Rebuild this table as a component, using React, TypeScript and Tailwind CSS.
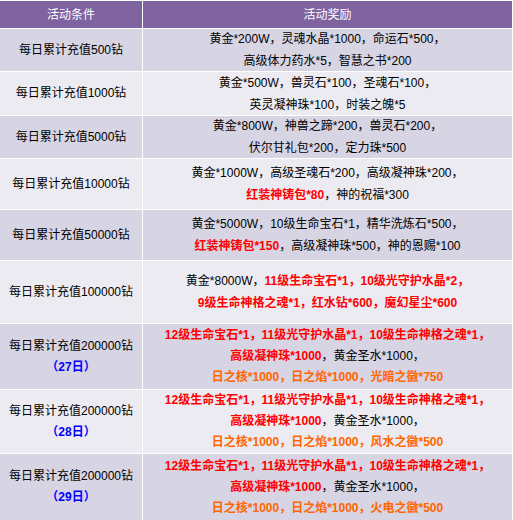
import type { ReactNode } from 'react';

type Row = {
  cond: string;
  day?: string;
  lines: ReactNode[];
  h: string;
  dark: boolean;
};

const R = ({ children }: { children: ReactNode }) => (
  <span className="font-bold text-[#ff0000]">{children}</span>
);
const O = ({ children }: { children: ReactNode }) => (
  <span className="font-bold text-[#ff6600]">{children}</span>
);

const topLines = [
  <R key="a">12级生命宝石*1，11级光守护水晶*1，10级生命神格之魂*1，</R>,
  <span key="b">
    <R>高级凝神珠*1000</R>，黄金圣水*1000，
  </span>,
];

const rows: Row[] = [
  {
    cond: '每日累计充值500钻',
    h: 'h-[42px]',
    dark: true,
    lines: ['黄金*200W，灵魂水晶*1000，命运石*500，', '高级体力药水*5，智慧之书*200'],
  },
  {
    cond: '每日累计充值1000钻',
    h: 'h-[43px]',
    dark: false,
    lines: ['黄金*500W，兽灵石*100，圣魂石*100，', '英灵凝神珠*100，时装之魄*5'],
  },
  {
    cond: '每日累计充值5000钻',
    h: 'h-[42px]',
    dark: true,
    lines: ['黄金*800W，神兽之蹄*200，兽灵石*200，', '伏尔甘礼包*200，定力珠*500'],
  },
  {
    cond: '每日累计充值10000钻',
    h: 'h-[50px]',
    dark: false,
    lines: [
      '黄金*1000W，高级圣魂石*200，高级凝神珠*200，',
      <span key="b">
        <R>红装神铸包*80</R>，神的祝福*300
      </span>,
    ],
  },
  {
    cond: '每日累计充值50000钻',
    h: 'h-[50px]',
    dark: true,
    lines: [
      '黄金*5000W，10级生命宝石*1，精华洗炼石*500，',
      <span key="b">
        <R>红装神铸包*150</R>，高级凝神珠*500，神的恩赐*100
      </span>,
    ],
  },
  {
    cond: '每日累计充值100000钻',
    h: 'h-[62px]',
    dark: false,
    lines: [
      <span key="a">
        黄金*8000W，<R>11级生命宝石*1，10级光守护水晶*2，</R>
      </span>,
      <R key="b">9级生命神格之魂*1，红水钻*600，魔幻星尘*600</R>,
    ],
  },
  {
    cond: '每日累计充值200000钻',
    day: '（27日）',
    h: 'h-[65px]',
    dark: true,
    lines: [...topLines, <O key="c">日之核*1000，日之焰*1000，光暗之徽*750</O>],
  },
  {
    cond: '每日累计充值200000钻',
    day: '（28日）',
    h: 'h-[63px]',
    dark: false,
    lines: [...topLines, <O key="c">日之核*1000，日之焰*1000，风水之徽*500</O>],
  },
  {
    cond: '每日累计充值200000钻',
    day: '（29日）',
    h: 'h-[66px]',
    dark: true,
    lines: [...topLines, <O key="c">日之核*1000，日之焰*1000，火电之徽*500</O>],
  },
];

export default function App() {
  return (
    <div
      className="w-[513px] h-[520px] overflow-hidden bg-white pt-px pr-px text-[12px] text-black"
      style={{ fontFamily: '"Liberation Sans", "Noto Sans CJK SC", sans-serif' }}
    >
      <div className="grid grid-cols-[142px_369px] gap-px">
        <div className="h-[27px] bg-[#7f63a1] text-white flex items-center justify-center">活动条件</div>
        <div className="h-[27px] bg-[#7f63a1] text-white flex items-center justify-center">活动奖励</div>
        {rows.map((r, i) => {
          const bg = r.dark ? 'bg-[#d7d4e4]' : 'bg-[#ecebf1]';
          const lh = r.lines.length > 2 ? 'leading-[21px]' : 'leading-[22px]';
          return [
            <div
              key={`c${i}`}
              className={`${r.h} ${bg} flex flex-col items-center justify-center leading-[21px]`}
            >
              <div>{r.cond}</div>
              {r.day && <div className="font-bold text-[#0000ff]">{r.day}</div>}
            </div>,
            <div
              key={`r${i}`}
              className={`${r.h} ${bg} ${lh} flex flex-col items-center justify-center whitespace-nowrap`}
            >
              {r.lines.map((l, j) => (
                <div key={j}>{l}</div>
              ))}
            </div>,
          ];
        })}
      </div>
    </div>
  );
}
